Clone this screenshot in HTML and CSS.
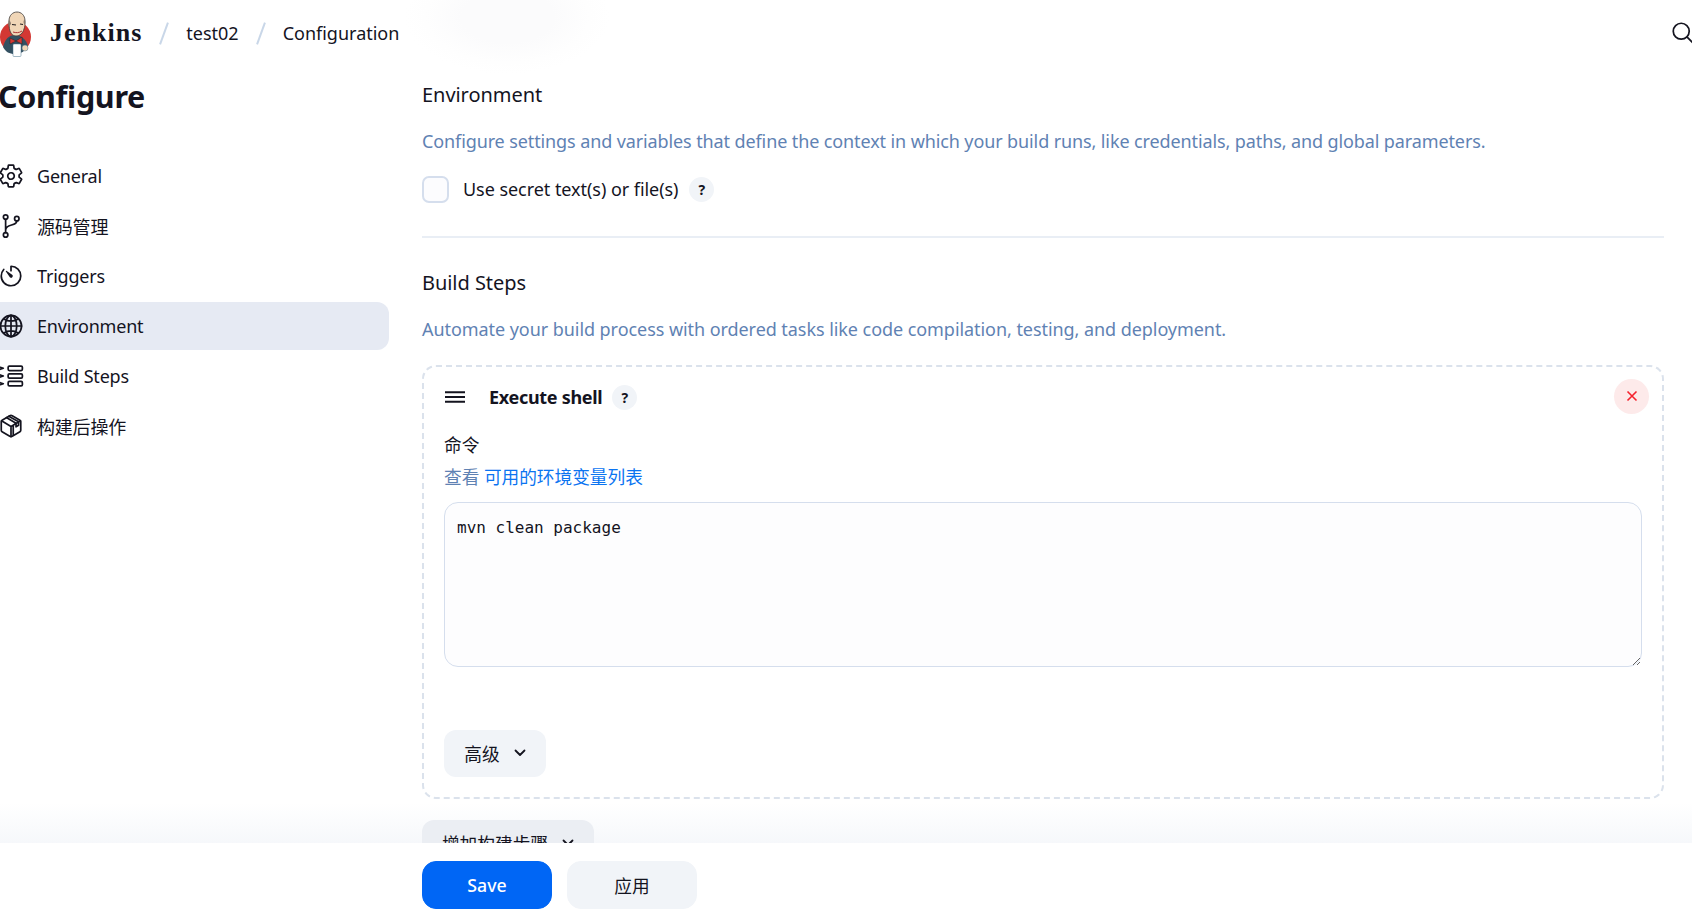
FILE: index.html
```html
<!DOCTYPE html>
<html lang="en">
<head>
<meta charset="utf-8">
<title>test02 Config - Jenkins</title>
<link rel="stylesheet" href="styles.css">
</head>
<body>
<div class="page">
  <header class="topbar">
    <a class="brand">
      <svg class="logo" viewBox="0 0 32 46" aria-hidden="true">
        <circle cx="15.5" cy="26" r="15.5" fill="#d33833"/>
        <path d="M3 36c2-8 6-12 12-12s11 4 13 11c-3 5-7 8-13 8S6 41 3 36z" fill="#335061"/>
        <path d="M9 10c0-6 4-9 8-9s8 3 8 9c0 3 0 6-1 8-1 4-4 7-8 7-3 0-5-2-6-5-1-3-1-7-1-10z" fill="#f0d6b7" stroke="#3d3a38" stroke-width=".8"/>
        <path d="M9 9c-1 2-1 5 0 7 1-1 1-2 2-3 0-2-1-3-2-4zM24.500 8c1 2 1 4 .5 6-1-1-1.500-2-1.500-3 0-1 .5-2 1-3z" fill="#8a7a6c"/>
        <path d="M12 13.500l4 .5M20 13l3 .5" stroke="#231f20" stroke-width="1.100"/>
        <path d="M13 21c3 1 6 1 9-1" stroke="#a33" stroke-width="1" fill="none"/>
        <path d="M10 27l6 3-6 3zM22 26l-6 4 6 3z" fill="#d33833" stroke="#231f20" stroke-width=".5"/>
        <rect x="13" y="33" width="8" height="12.500" rx="1" fill="#fff" stroke="#49728b" stroke-width=".5"/>
        <circle cx="25" cy="37" r="3" fill="#f0d6b7" stroke="#49728b" stroke-width=".5"/>
      </svg>
      <span class="brand-name">Jenkins</span>
    </a>
    <span class="sep"></span>
    <span class="crumb">test02</span>
    <span class="sep"></span>
    <span class="crumb">Configuration</span>
    <svg class="search" viewBox="0 0 512 512" aria-hidden="true">
      <path d="M221.09 64a157.09 157.09 0 10157.09 157.09A157.1 157.1 0 00221.09 64z" class="st"/>
      <path d="M338.29 338.29L448 448" class="st"/>
    </svg>
  </header>

  <div class="layout">
    <aside class="side">
      <h1 class="title">Configure</h1>
      <nav class="nav">
        <a class="nav-item">
          <svg class="nav-icon" viewBox="0 0 512 512"><path class="st" d="M262.29 192.31a64 64 0 1057.4 57.4 64.13 64.13 0 00-57.4-57.4zM416.39 256a154.34 154.34 0 01-1.53 20.79l45.21 35.46a10.81 10.81 0 012.45 13.75l-42.77 74a10.81 10.81 0 01-13.14 4.59l-44.9-18.08a16.11 16.11 0 00-15.17 1.75A164.48 164.48 0 01325 400.8a15.94 15.94 0 00-8.82 12.14l-6.73 47.89a11.08 11.08 0 01-10.68 9.17h-85.54a11.11 11.11 0 01-10.69-8.87l-6.72-47.82a16.07 16.07 0 00-9-12.22 155.3 155.3 0 01-21.46-12.57 16 16 0 00-15.11-1.71l-44.89 18.07a10.81 10.81 0 01-13.14-4.58l-42.77-74a10.8 10.8 0 012.45-13.75l38.21-30a16.05 16.05 0 006-14.08c-.36-4.17-.58-8.33-.58-12.5s.21-8.27.58-12.35a16 16 0 00-6.07-13.94l-38.19-30A10.81 10.81 0 0149.48 186l42.77-74a10.81 10.81 0 0113.14-4.59l44.9 18.08a16.11 16.11 0 0015.17-1.75A164.48 164.48 0 01187 111.2a15.94 15.94 0 008.82-12.14l6.73-47.89A11.08 11.08 0 01213.23 42h85.54a11.11 11.11 0 0110.69 8.87l6.72 47.82a16.07 16.07 0 009 12.22 155.3 155.3 0 0121.46 12.57 16 16 0 0015.11 1.71l44.89-18.07a10.81 10.81 0 0113.14 4.58l42.77 74a10.8 10.8 0 01-2.45 13.75l-38.21 30a16.05 16.05 0 00-6.05 14.08c.33 4.14.55 8.3.55 12.47z"/></svg>
          <span>General</span>
        </a>
        <a class="nav-item">
          <svg class="nav-icon" viewBox="0 0 512 512"><circle class="st" cx="150" cy="80" r="44"/><circle class="st" cx="150" cy="432" r="44"/><circle class="st" cx="370" cy="112" r="44"/><path class="st" d="M150 124v264M370 156c0 110-220 50-220 180"/></svg>
          <span>源码管理</span>
        </a>
        <a class="nav-item">
          <svg class="nav-icon" viewBox="0 0 512 512"><path class="st" d="M112.91 128A191.85 191.85 0 0064 254c-1.18 106.35 85.65 193.8 192 194 106.2.2 192-85.83 192-192 0-104.54-83.55-189.61-187.5-192a4.36 4.36 0 00-4.5 4.37V152"/><path class="fl" d="M233.38 278.63l-79-113a8.13 8.13 0 0111.32-11.32l113 79a32.5 32.5 0 01-37 53.34 33.21 33.21 0 01-8.32-8.02z"/></svg>
          <span>Triggers</span>
        </a>
        <a class="nav-item active">
          <svg class="nav-icon" viewBox="0 0 512 512"><path class="st" d="M256 48C141.13 48 48 141.13 48 256s93.13 208 208 208 208-93.13 208-208S370.87 48 256 48z"/><path class="st" d="M256 48c-58.07 0-112.67 93.13-112.67 208S197.93 464 256 464s112.67-93.13 112.67-208S314.07 48 256 48z"/><path class="st" d="M117.33 117.33c38.24 27.15 86.38 43.34 138.67 43.34s100.43-16.19 138.67-43.34M394.67 394.67c-38.24-27.15-86.38-43.34-138.67-43.34s-100.43 16.19-138.67 43.34M256 48v416M464 256H48"/></svg>
          <span>Environment</span>
        </a>
        <a class="nav-item">
          <svg class="nav-icon" viewBox="0 0 512 512"><rect class="st" x="200" y="60" width="280" height="88" rx="24"/><rect class="st" x="200" y="212" width="280" height="88" rx="24"/><rect class="st" x="200" y="364" width="280" height="88" rx="24"/><path class="st" d="M44 84l60 20-60 20M44 236l60 20-60 20M44 388l60 20-60 20"/></svg>
          <span>Build Steps</span>
        </a>
        <a class="nav-item">
          <svg class="nav-icon" viewBox="0 0 512 512"><path class="st" d="M448 341.37V170.61A32 32 0 00432.11 143l-152-88.46a47.94 47.94 0 00-48.24 0L79.89 143A32 32 0 0064 170.61v170.76A32 32 0 0079.89 369l152 88.46a48 48 0 0048.24 0l152-88.46A32 32 0 00448 341.37z"/><path class="st" d="M69 154l187 110 187-110M256 464V264M165 90l190 112v70l50-30v-70L212 66M300 238v190"/></svg>
          <span>构建后操作</span>
        </a>
      </nav>
    </aside>

    <main class="main">
      <section class="section section-env">
        <h2 class="sec-title">Environment</h2>
        <p class="sec-desc">Configure settings and variables that define the context in which your build runs, like credentials, paths, and global parameters.</p>
        <div class="check-row">
          <span class="checkbox"></span>
          <span class="check-label">Use secret text(s) or file(s)</span>
          <span class="help">?</span>
        </div>
      </section>

      <section class="section section-build">
        <h2 class="sec-title">Build Steps</h2>
        <p class="sec-desc">Automate your build process with ordered tasks like code compilation, testing, and deployment.</p>
        <div class="step">
          <div class="step-head">
            <svg class="drag" viewBox="0 0 20 12" aria-hidden="true"><path d="M0 1.200h20M0 6h20M0 10.800h20"/></svg>
            <span class="step-name">Execute shell</span>
            <span class="help">?</span>
            <span class="close"><svg viewBox="0 0 12 12" aria-hidden="true"><path d="M1.500 1.500l9 9M10.500 1.500l-9 9"/></svg></span>
          </div>
          <div class="field-label">命令</div>
          <div class="field-hint">查看 <a class="link">可用的环境变量列表</a></div>
          <textarea class="cmd" spellcheck="false">mvn clean package</textarea>
          <button class="btn adv">高级 <svg class="chev" viewBox="0 0 12 8" aria-hidden="true"><path d="M1.500 1.500L6 6l4.500-4.500"/></svg></button>
        </div>
        <button class="btn add">增加构建步骤 <svg class="chev" viewBox="0 0 12 8" aria-hidden="true"><path d="M1.500 1.500L6 6l4.500-4.500"/></svg></button>
      </section>
    </main>
  </div>

  <footer class="bottom">
    <button class="btn-lg primary">Save</button>
    <button class="btn-lg">应用</button>
  </footer>
</div>
</body>
</html>
```

FILE: styles.css
```css
* { box-sizing: border-box; }
html, body { margin: 0; height: 100%; overflow: hidden; background: #fff; }
body {
  font-family: "Noto Sans", "Noto Sans CJK SC", sans-serif;
  color: #14141f;
  font-size: 18px;
}
.page { position: relative; width: 1692px; height: 911px; overflow: hidden; }
.page::before {
  content: ""; position: absolute; left: 405px; top: -40px; width: 205px; height: 114px;
  background: radial-gradient(closest-side, #fbfbfc 45%, #fefefe 80%, rgba(255,255,255,0));
}
.page::after {
  content: ""; position: absolute; left: 0; right: 0; bottom: 68px; height: 40px;
  background: linear-gradient(rgba(240,243,248,0), rgba(240,243,248,.6));
}

.st { fill: none; stroke: currentColor; stroke-width: 34; stroke-linecap: round; stroke-linejoin: round; }
.fl { fill: currentColor; }

.topbar { position: relative; z-index: 1; display: flex; align-items: center; height: 66px; }
.brand { display: flex; align-items: center; gap: 18px; }
.logo { width: 32px; height: 46px; margin-top: 2px; display: block; }
.brand-name {
  font-family: "Liberation Serif", serif;
  font-weight: 700;
  font-size: 26px;
  letter-spacing: 1px;
  color: #14141f;
}
.sep {
  width: 2px; height: 23px; margin: 0 21px;
  background: #c9d7e8;
  transform: rotate(20deg);
}
.crumb { font-size: 18px; letter-spacing: 0; }
.search { width: 26px; height: 26px; margin-left: auto; margin-right: -4px; }

.layout { position: relative; z-index: 1; display: flex; margin-left: -16px; }
.side { width: 405px; flex: none; }
.title { margin: -1px 0 25px 14px; font-size: 30.500px; line-height: 62px; font-weight: 700; letter-spacing: -.3px; }
.nav { display: flex; flex-direction: column; gap: 2px; }
.nav-item {
  display: flex; align-items: center; gap: 13px;
  height: 48px; padding-left: 14px;
  border-radius: 12px;
  font-size: 18px;
  letter-spacing: -.2px;
}
.nav-item.active { background: #e6eaf3; }
.nav-icon { width: 26px; height: 26px; flex: none; }

.main { margin-left: 33px; width: 1242px; flex: none; }
.section-env { padding-top: 15px; padding-bottom: 33px; border-bottom: 2px solid #e9eef5; }
.section-build { padding-top: 31px; }
.sec-title { margin: 0; font-size: 20px; line-height: 28px; font-weight: 400; letter-spacing: -.05px; }
.sec-desc { margin: 18px 0 0; font-size: 18px; line-height: 28px; color: #5f82b3; letter-spacing: -.11px; }
.section-build .sec-desc { letter-spacing: -.06px; }
.check-row { display: flex; align-items: center; margin-top: 20px; height: 28px; }
.checkbox { width: 27px; height: 27px; border: 2px solid #d5deed; border-radius: 7px; background: #fcfcfe; margin-right: 14px; }
.check-label { letter-spacing: -.05px; margin-right: 11px; }
.help {
  display: inline-flex; align-items: center; justify-content: center;
  width: 25px; height: 25px; border-radius: 50%;
  background: #f1f4f8; font-size: 14px; font-weight: 700;
}

.step {
  margin-top: 22px;
  border: 2px dashed #dbe2ec;
  border-radius: 14px;
  padding: 0 20px 21px;
  height: 434px;
}
.step-head { display: flex; align-items: center; height: 60px; }
.drag { width: 20px; height: 12px; margin-right: 24px; margin-left: 1px; fill: none; stroke: #14141f; stroke-width: 2; }
.step-name { font-weight: 700; font-size: 18px; letter-spacing: -.3px; margin-right: 10px; }
.close {
  display: flex; align-items: center; justify-content: center;
  width: 35px; height: 35px; margin-left: auto; margin-right: -7px; margin-top: -2px; border-radius: 50%;
  background: #fdeaea;
}
.close svg { width: 12px; height: 12px; fill: none; stroke: #f5222d; stroke-width: 1.600; }
.field-label { margin-top: 3px; font-size: 17.700px; line-height: 30px; }
.field-hint { font-size: 17.700px; line-height: 30px; margin-top: 2px; color: #5f82b3; letter-spacing: -.03px; }
.link { color: #0b74f1; }
.cmd {
  display: block; width: 100%; height: 165px; margin-top: 10px;
  padding: 13px 12px;
  border: 1.500px solid #d5deed; border-radius: 14px;
  background: #fdfdfe;
  font-family: "DejaVu Sans Mono", monospace;
  font-size: 16px; line-height: 24px; color: #14141f;
  outline: none;
}
.btn {
  display: inline-flex; align-items: center; gap: 14px;
  border: 0; background: #f1f4f8; color: #14141f;
  font-family: inherit; font-size: 17.700px;
  border-radius: 12px;
  padding: 0 0 2px;
}
.adv { height: 47px; width: 102px; justify-content: center; margin-top: 63px; }
.add { height: 48px; width: 172px; justify-content: center; margin-top: 21px; background: #ebeef3; }
.chev { width: 12px; height: 8px; fill: none; stroke: #14141f; stroke-width: 1.800; stroke-linecap: round; stroke-linejoin: round; }

.bottom {
  position: absolute; left: 0; right: 0; bottom: 0; z-index: 2;
  height: 68px;
  display: flex; gap: 15px; align-items: flex-start;
  padding: 18px 0 0 422px;
  background: #fff;
}
.btn-lg {
  width: 130px; height: 48px; border: 1px solid #f1f4f8; border-radius: 14px;
  background: #f1f4f8; color: #14141f;
  font-family: inherit; font-size: 17.700px;
}
.btn-lg.primary { background: #0066f5; border-color: #0066f5; color: #fff; font-weight: 500; }
```
